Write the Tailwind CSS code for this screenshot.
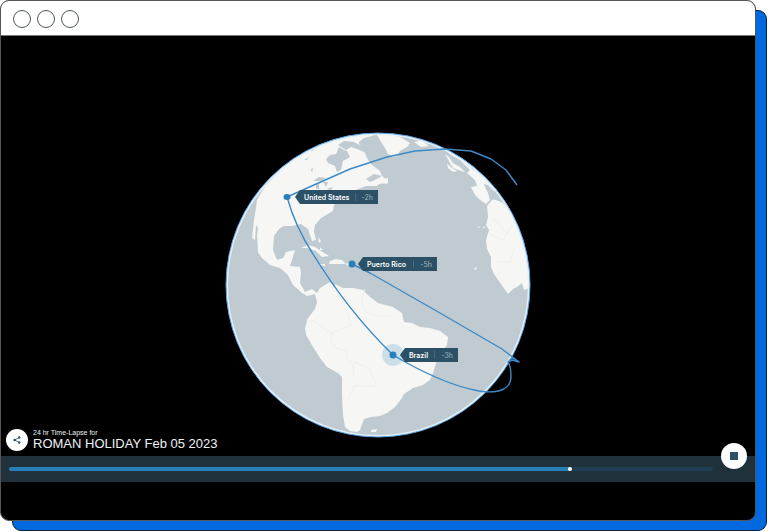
<!DOCTYPE html>
<html lang="en">
<head>
    <meta charset="UTF-8">
    <meta name="viewport" content="width=device-width, initial-scale=1.0">
    <title>24 hr Time-Lapse - Roman Holiday</title>
    <script src="https://cdn.jsdelivr.net/npm/@tailwindcss/browser@4"></script>
</head>
<body class="bg-white font-['Liberation_Sans',Arial,sans-serif]">
    <div class="relative flex min-h-screen flex-col pr-3 pb-[11px]">
        <!-- Blue panel behind the window -->
        <div class="absolute top-[10px] right-px bottom-px left-3 rounded-[9px] border border-[#06203f] bg-[#0069df]"></div>

        <!-- Browser window -->
        <div class="relative flex flex-1 flex-col overflow-hidden rounded-[9px] border border-[#555] bg-black">
            <header class="flex h-[35px] items-center gap-[6px] border-b border-[#777] bg-white px-3 pt-[2px]">
                <span class="size-[18px] rounded-full border border-[#4c555c]"></span>
                <span class="size-[18px] rounded-full border border-[#4c555c]"></span>
                <span class="size-[18px] rounded-full border border-[#4c555c]"></span>
            </header>

            <main class="grid flex-1">
                <!-- Globe -->
                <div class="col-start-1 row-start-1 flex justify-center pt-[94px]">
                    <div class="relative size-[310px]">
                        <svg class="size-full overflow-visible" viewBox="223 130 310 310" fill="none">
                            <defs>
                                <clipPath id="globe"><circle cx="378" cy="285" r="152"/></clipPath>
                            </defs>
                            <g clip-path="url(#globe)">
                                <circle cx="378" cy="285" r="152" fill="#bfcbd1"/>
                                <!-- Land -->
                                <g fill="#f6f6f4">
                                    <path d="M286 150L320 134L350 126L378 131L372 136L364 138L359 142L360 148L365 153L368 160L372 165L380 171L382 176L388 181L387 184L381 182L377 186L366 186L358 189L349 194L341 200L334 205L333 211L321 218L315 225L314 232L316 240L312 241L308 229L301 224L292 226L284 226L279 229L274 236L273 250L277 260L283 258L286 252L295 250L292 260L290 266L300 267L301 273L300 283L305 292L312 289L317 293L320 288L330 282L335 287L335 284L343 288L353 288L363 290L370 297L378 303L393 307L402 313L404 322L412 323L420 327L430 328L440 331L448 337L447 345L440 355L437 360L433 373L430 380L423 385L413 388L404 394L402 398L395 407L387 413L380 416L371 417L364 419L362 424L360 430L357 432L350 431L345 427L343 415L342 395L342 377L338 373L327 367L320 358L313 347L306 335L305 328L308 318L315 309L317 302L315 294L307 296L302 293L293 285L288 275L280 268L270 265L262 258L258 252L257 235L258 228L256 225L255 240L252 238L254 220L256 208L257 200L264 188L274 177L290 162L286 158Z"/>
                                    <!-- Caribbean -->
                                    <path d="M301 248L308 245L315 247L321 251L329 256L322 257L316 251L307 248ZM330 261L336 259L342 260L346 264L337 264L329 264ZM320 264L325 264L325 266L320 265ZM347 263L351 263L350 266L346 265ZM318 237L321 241L319 243ZM320 247L323 250L320 250Z"/>
                                    <!-- Greenland, Iceland -->
                                    <path d="M377 135L388 134L400 137L410 143L407 147L400 151L397 156L393 157L388 154L385 148L381 142Z"/>
                                    <path d="M414 142L421 140L429 146L421 147ZM376 181L388 178L388 183L378 184Z"/>
                                    <!-- British Isles -->
                                    <path d="M445 154L449 157L453 163L460 167L465 172L461 171L453 168L450 163ZM447 163L452 168L457 171L453 172L448 168Z"/>
                                    <!-- Europe -->
                                    <path d="M442 147L455 150L478 166L500 191L494 191L488 185L484 184L485 187L488 193L490 200L486 204L479 199L475 195L471 187L477 186L475 180L467 173L470 170L460 160L451 155Z"/>
                                    <!-- Africa -->
                                    <path d="M493 199L487 206L488 217L486 225L489 230L486 240L487 249L491 257L491 267L494 274L503 287L508 294L513 289L517 287L522 283L524 290L533 287L526 235L511 202L502 202Z"/>
                                    <path d="M471 264L473 264M474 269L477 267L476 270ZM477 226L480 227L479 228ZM483 227L485 226L484 229Z"/>
                                    <!-- Falklands -->
                                    <path d="M371 430L377 429L376 432L371 432Z"/>
                                </g>
                                <!-- Bays and lakes -->
                                <g fill="#bfcbd1">
                                    <path d="M326 159L330 155L336 154L339 147L344 150L347 151L350 157L343 161L341 170L337 172L335 166L328 163Z"/>
                                    <path d="M338 145L344 141L354 142L361 146L364 152L357 149L351 147L346 150ZM345 135L354 132L362 134L352 137ZM366 179L374 174L382 176L375 180L370 182Z"/>
                                    <path d="M313 181L319 177L326 178L321 181ZM316 184L319 182L319 189L316 189ZM323 182L328 182L326 187ZM326 189L333 187L331 190ZM311 169L313 168L312 173ZM304 160L309 157L307 160ZM309 151L316 148L313 151Z"/>
                                    <path d="M490 190L496 192L509 204L510 211L503 203L497 200L490 199L489 194Z"/>
                                </g>
                                <path d="M458 156L466 163L474 170M497 192L503 199" stroke="#bfcbd1" stroke-width="1"/>
                                <!-- Borders -->
                                <path d="M306 320L316 322L321 327L332 333L331 341L336 348L346 351L347 358L353 365L354 376M365 289L361 300L366 312L377 316L392 316M336 290L346 307L351 325L331 334M354 362L369 368L374 379L376 386L354 386L348 400M493 218L509 235M489 234L503 240L512 225M496 262L510 262L515 246" stroke="#eeefee"/>
                            </g>
                            <circle cx="378" cy="285" r="151" stroke="#e2f0fa" stroke-width="2"/>
                            <circle cx="378" cy="285" r="152" stroke="#5a9fdb" stroke-width="1"/>
                            <!-- Routes -->
                            <g stroke="#3c89c7" stroke-width="1.4" stroke-linejoin="round">
                                <path d="M287 197L350 169L387 157L415 151L445 149L471 151L491 159L506 170L517 185"/>
                                <path d="M287 197C292 215 300 234 313 254C332 285 358 321 393 355"/>
                                <path d="M352 264L370 273L440 313L502 349L519 362L512 360L508 362"/>
                                <path d="M393 355C420 371 451 386 479 391C500 394 511 389 511 376C511 370 510 365 508 362L512 358L519 362"/>
                            </g>
                            <circle cx="393" cy="355" r="11" fill="#2980b9" fill-opacity=".2"/>
                            <g fill="#2980b9">
                                <ellipse cx="287" cy="197" rx="3.5" ry="3"/>
                                <circle cx="352" cy="264" r="3.5"/>
                                <circle cx="393" cy="355" r="3.5"/>
                            </g>
                        </svg>

                        <!-- Country labels -->
                        <div class="absolute top-[60px] left-[72px] flex h-[14px] w-[83px] items-center justify-between bg-[#2c5166] pr-[5px] pl-[9px] font-['Inter',sans-serif] text-[7px] leading-none text-white [clip-path:polygon(0_50%,5px_0,100%_0,100%_100%,5px_100%)]">
                            <span class="font-semibold">United States</span>
                            <span class="h-2 w-px bg-[#48697b]"></span>
                            <span class="text-[#a3b5bf]">-2h</span>
                        </div>
                        <div class="absolute top-[127px] left-[135px] flex h-[14px] w-[79px] items-center justify-between bg-[#2c5166] pr-[5px] pl-[9px] font-['Inter',sans-serif] text-[7px] leading-none text-white [clip-path:polygon(0_50%,5px_0,100%_0,100%_100%,5px_100%)]">
                            <span class="font-semibold">Puerto Rico</span>
                            <span class="h-2 w-px bg-[#48697b]"></span>
                            <span class="text-[#a3b5bf]">-5h</span>
                        </div>
                        <div class="absolute top-[218px] left-[177px] flex h-[14px] w-[58px] items-center justify-between bg-[#2c5166] pr-[5px] pl-[9px] font-['Inter',sans-serif] text-[7px] leading-none text-white [clip-path:polygon(0_50%,5px_0,100%_0,100%_100%,5px_100%)]">
                            <span class="font-semibold">Brazil</span>
                            <span class="h-2 w-px bg-[#48697b]"></span>
                            <span class="text-[#a3b5bf]">-3h</span>
                        </div>
                    </div>
                </div>

                <!-- Player controls -->
                <div class="z-10 col-start-1 row-start-1 flex flex-col self-end pb-[38px]">
                    <div class="flex items-center gap-[5px] pb-[5px] pl-[5px]">
                        <button type="button" aria-label="Share" class="flex size-[22px] items-center justify-center rounded-full bg-white">
                            <svg class="size-2" viewBox="0 0 8 8" fill="#2c5166" stroke="#2c5166">
                                <path d="M6.2 1.5L1.7 4L6.2 6.5" fill="none" stroke-width=".8"/>
                                <circle cx="6.2" cy="1.5" r="1.2" stroke="none"/>
                                <circle cx="1.7" cy="4" r="1.3" stroke="none"/>
                                <circle cx="6.2" cy="6.5" r="1.2" stroke="none"/>
                            </svg>
                        </button>
                        <div class="pt-px text-[#eef2f5]">
                            <p class="text-[7px] leading-[8px]">24 hr Time-Lapse for</p>
                            <h1 class="text-[13px] leading-[14px]">ROMAN HOLIDAY Feb 05 2023</h1>
                        </div>
                    </div>
                    <div class="relative flex h-[26px] items-center bg-[#1f313b] pr-[42px] pl-2">
                        <input type="range" min="0" max="1000" value="798" aria-label="Timeline" class="h-1 w-full appearance-none rounded-full bg-[linear-gradient(to_right,#2980b9_79.7%,#213d52_79.7%)] [&::-webkit-slider-thumb]:size-1 [&::-webkit-slider-thumb]:appearance-none [&::-webkit-slider-thumb]:rounded-full [&::-webkit-slider-thumb]:bg-white">
                        <button type="button" aria-label="Stop" class="absolute -top-[13px] right-2 flex size-[26px] items-center justify-center rounded-full bg-white">
                            <span class="size-2 bg-[#2c5166]"></span>
                        </button>
                    </div>
                </div>
            </main>
        </div>
    </div>
</body>
</html>
